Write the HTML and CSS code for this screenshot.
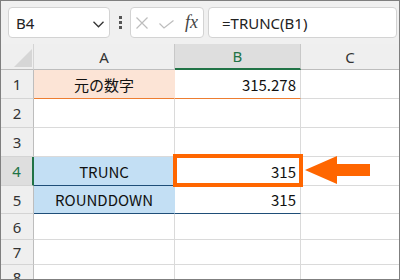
FILE: index.html
```html
<!DOCTYPE html>
<html lang="ja">
<head>
    <meta charset="UTF-8">
    <title>TRUNC</title>
    <link rel="stylesheet" href="styles.css">
</head>
<body>
    <div class="window">
        <div class="toolbar">
            <div class="namebox">
                <span>B4</span>
                <svg width="11" height="7" viewBox="0 0 11 7"><polyline points="0.5,0.8 5.5,5.8 10.5,0.8" fill="none" stroke="#333" stroke-width="1.3"/></svg>
            </div>
            <div class="dots"><i></i><i></i><i></i></div>
            <div class="fxbox">
                <svg class="cancel" width="12" height="12" viewBox="0 0 12 12"><path d="M0.5 0.5 L11.5 11.5 M11.5 0.5 L0.5 11.5" stroke="#bdbdbd" stroke-width="1.2"/></svg>
                <svg class="enter" width="15" height="9" viewBox="0 0 15 9"><polyline points="0.5,3.5 5,8 14.5,0.5" fill="none" stroke="#bdbdbd" stroke-width="1.2"/></svg>
                <span class="fx">fx</span>
            </div>
            <div class="formula">=TRUNC(B1)</div>
        </div>

        <div class="sheet">
            <div class="corner"><svg width="32" height="25" viewBox="0 0 32 25"><polygon points="13,23 31,23 31,5" fill="#d6d6d6"/></svg></div>
            <div class="colhead">A</div>
            <div class="colhead sel">B</div>
            <div class="colhead last">C</div>

            <div class="rowhead">1</div>
            <div class="cell center peach orange-line">元の数字</div>
            <div class="cell num orange-line">315.278</div>
            <div class="cell last"></div>

            <div class="rowhead">2</div>
            <div class="cell"></div>
            <div class="cell"></div>
            <div class="cell last"></div>

            <div class="rowhead">3</div>
            <div class="cell"></div>
            <div class="cell"></div>
            <div class="cell last"></div>

            <div class="rowhead sel">4</div>
            <div class="cell center blue blue-line">TRUNC</div>
            <div class="cell num blue-line">315</div>
            <div class="cell last"></div>

            <div class="rowhead">5</div>
            <div class="cell center blue blue-line">ROUNDDOWN</div>
            <div class="cell num blue-line">315</div>
            <div class="cell last"></div>

            <div class="rowhead">6</div>
            <div class="cell"></div>
            <div class="cell"></div>
            <div class="cell last"></div>

            <div class="rowhead">7</div>
            <div class="cell"></div>
            <div class="cell"></div>
            <div class="cell last"></div>

            <div class="rowhead">8</div>
            <div class="cell"></div>
            <div class="cell"></div>
            <div class="cell last"></div>

            <div class="highlight"></div>
            <svg class="arrow" width="66" height="32" viewBox="0 0 66 32"><polygon points="0,16 32,2 32,10 65,10 65,22 32,22 32,30" fill="#ff6600"/></svg>
        </div>
    </div>
</body>
</html>
```

FILE: styles.css
```css
* {
    margin: 0;
    padding: 0;
    box-sizing: border-box;
}
body {
    width: 400px;
    height: 280px;
    overflow: hidden;
    background: #fff;
}
.window {
    width: 400px;
    height: 280px;
    border: 1px solid #7f7f7f;
    background: #f0f0f0;
    overflow: hidden;
}

/* formula bar */
.toolbar {
    display: flex;
    align-items: center;
    height: 43px;
    padding: 0 2px 0 7px;
    font-family: 'Noto Sans', sans-serif;
    font-size: 15px;
    color: #222;
}
.namebox {
    width: 102px;
    height: 31px;
    background: #fff;
    border: 1px solid #d3d3d3;
    border-radius: 4px;
    display: flex;
    align-items: center;
    justify-content: space-between;
    padding: 0 5px 0 7px;
}
.namebox svg {
    margin-top: 3px;
}
.dots {
    width: 20px;
    display: flex;
    flex-direction: column;
    align-items: center;
    gap: 2px;
}
.dots i {
    width: 3px;
    height: 3px;
    background: #555;
}
.fxbox {
    width: 74px;
    height: 31px;
    background: #fff;
    border: 1px solid #d3d3d3;
    border-radius: 4px;
    display: flex;
    align-items: center;
    padding-left: 5px;
}
.fxbox .enter {
    margin-left: 11px;
    margin-top: 3px;
}
.fx {
    margin-left: 11px;
    font-family: 'Liberation Serif', serif;
    font-style: italic;
    font-size: 18px;
    color: #444;
}
.formula {
    flex: 1;
    height: 31px;
    margin-left: 4px;
    background: #fff;
    border: 1px solid #d3d3d3;
    border-radius: 4px;
    display: flex;
    align-items: center;
    padding-left: 13px;
}

/* grid */
.sheet {
    position: relative;
    height: 235px;
    overflow: hidden;
    display: grid;
    grid-template-columns: 33px 141px 126px 98px;
    grid-template-rows: 26px 29px 29px 29px 29px 28px 26px 25px 25px;
    background: #fff;
}
.corner, .colhead, .rowhead {
    background: #efefef;
    font-family: 'Noto Sans', sans-serif;
    font-size: 15px;
    color: #333;
    display: flex;
    align-items: center;
    justify-content: center;
}
.corner {
    border-right: 1px solid #d4d4d4;
    border-bottom: 1px solid #bdbdbd;
}
.colhead {
    border-right: 1px solid #c8c8c8;
    border-bottom: 1px solid #bdbdbd;
}
.colhead.sel {
    background: #dedede;
    color: #217346;
    border-bottom: 2px solid #217346;
}
.colhead.last {
    border-right: none;
}
.rowhead {
    border-right: 1px solid #bdbdbd;
    border-bottom: 1px solid #d4d4d4;
}
.rowhead.sel {
    background: #dedede;
    color: #217346;
    border-right: 2px solid #217346;
}
.cell {
    border-right: 1px solid #dadada;
    border-bottom: 1px solid #dadada;
    font-family: 'Noto Sans CJK JP', sans-serif;
    font-size: 15px;
    color: #111;
    display: flex;
    align-items: center;
}
.cell.last {
    border-right: none;
}
.center {
    justify-content: center;
}
.num {
    justify-content: flex-end;
    padding-right: 4px;
}
.peach {
    background: #fce4d6;
    border-right-color: #fce4d6;
}
.orange-line {
    border-bottom-color: #ed7d31;
}
.blue {
    background: #c3dff4;
    border-right-color: #c3dff4;
}
.blue-line {
    border-bottom-color: #1f4e78;
}

/* callout */
.highlight {
    position: absolute;
    left: 172px;
    top: 110px;
    width: 130px;
    height: 33px;
    border: 4px solid #ff6600;
}
.arrow {
    position: absolute;
    left: 304px;
    top: 110px;
}
```
